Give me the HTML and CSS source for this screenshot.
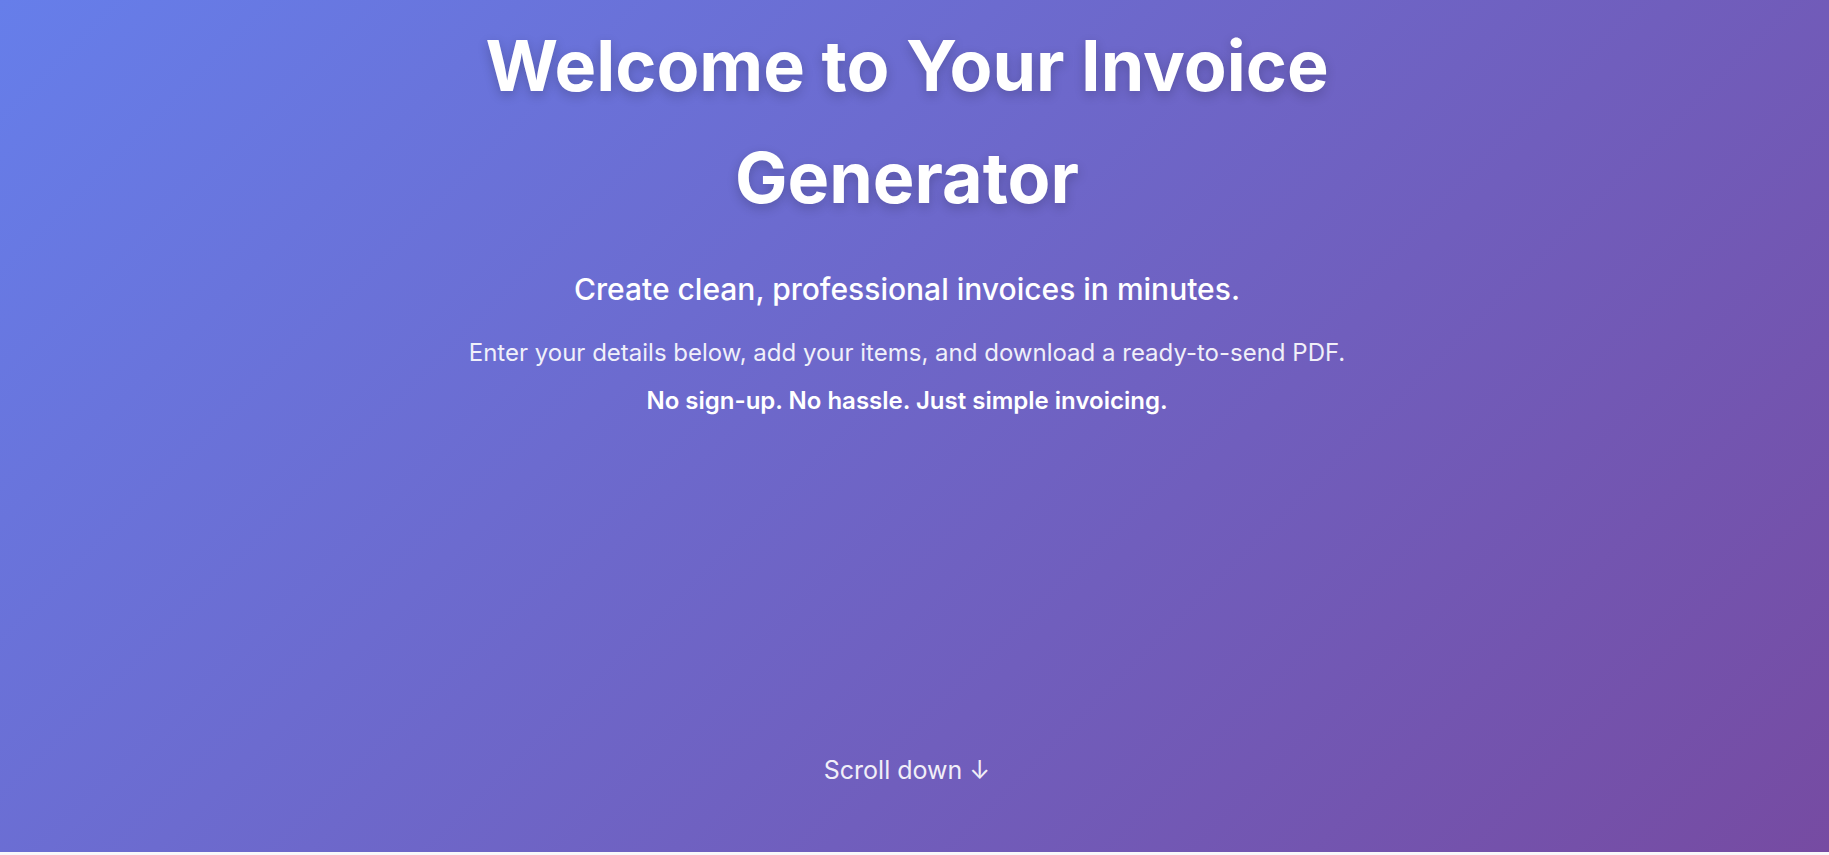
FILE: index.html
```html
<!DOCTYPE html>
<html lang="en">
<head>
    <meta charset="UTF-8">
    <meta name="viewport" content="width=device-width, initial-scale=1.0">
    <title>Invoice Generator</title>
    <link rel="stylesheet" href="styles.css">
</head>
<body>
    <section class="hero">
        <div class="hero-content">
            <h1>Welcome to Your Invoice Generator</h1>
            <p class="hero-lead">Create clean, professional invoices in minutes.</p>
            <p class="hero-text">Enter your details below, add your items, and download a ready-to-send PDF.</p>
            <p class="hero-strong">No sign-up. No hassle. Just simple invoicing.</p>
        </div>
        <div class="scroll-hint">Scroll down ↓</div>
    </section>
</body>
</html>
```

FILE: styles.css
```css
body {
    font-family: Inter, "Noto Sans", Arial, sans-serif;
    margin: 0;
    background-color: #f8f9fa;
    color: #333;
}

.hero {
    height: 852px;
    display: flex;
    flex-direction: column;
    align-items: center;
    justify-content: space-between;
    padding: 10px 35px 67px 20px;
    box-sizing: border-box;
    background: linear-gradient(135deg, #667eea 0%, #764ba2 100%);
    color: #fff;
    text-align: center;
}

.hero-content {
    max-width: 920px;
}

.hero h1 {
    font-size: 70px;
    font-weight: 700;
    line-height: 1.6;
    margin: 0 0 31px;
    text-shadow: 0 4px 12px rgba(0, 0, 0, 0.2);
}

.hero-lead {
    font-size: 30px;
    font-weight: 500;
    line-height: 1.6;
    margin: 0 0 21px;
}

.hero-text {
    font-size: 24px;
    line-height: 1.6;
    margin: 0 0 10px;
    opacity: 0.9;
}

.hero-strong {
    font-size: 24px;
    font-weight: 600;
    line-height: 1.6;
    margin: 0;
}

.scroll-hint {
    font-size: 25px;
    opacity: 0.9;
}
```
